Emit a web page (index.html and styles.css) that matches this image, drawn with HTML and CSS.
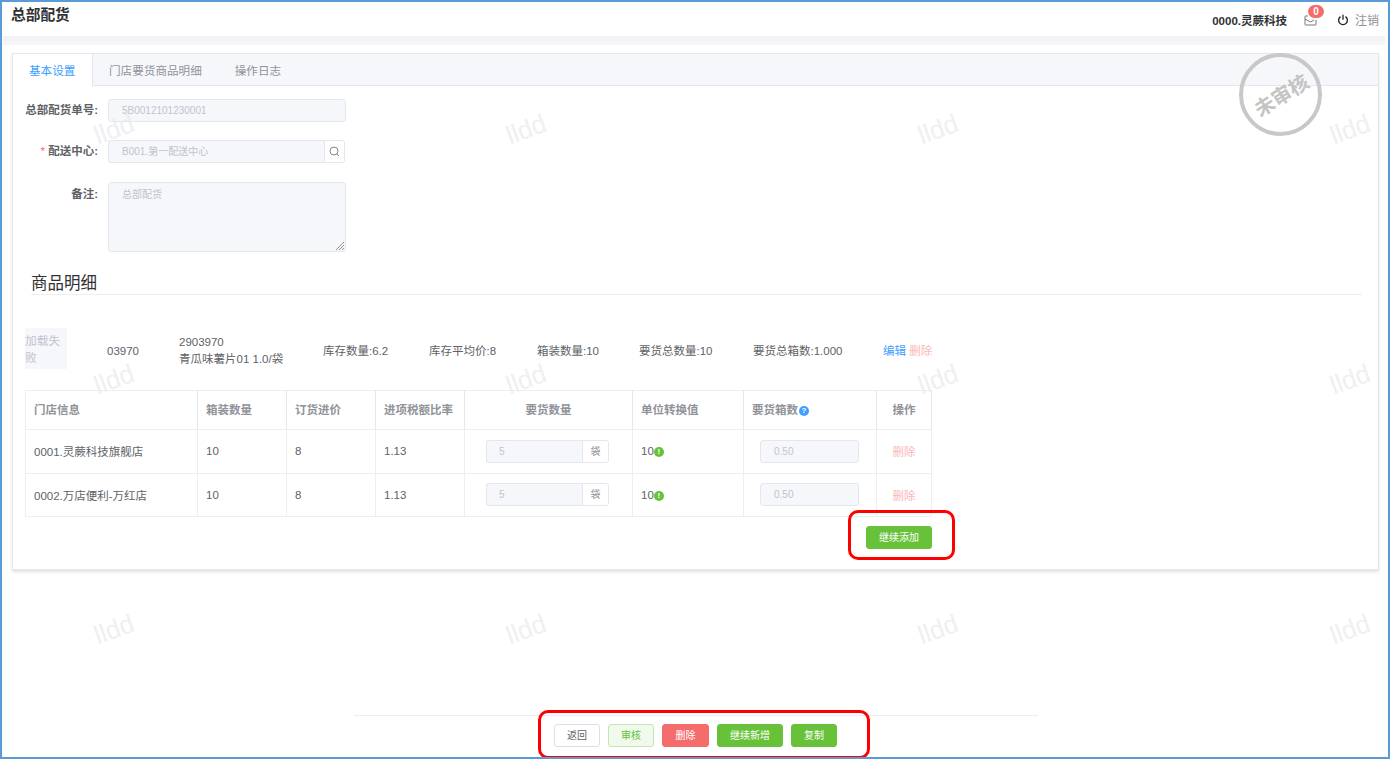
FILE: index.html
```html
<!DOCTYPE html>
<html lang="zh">
<head>
<meta charset="utf-8">
<title>总部配货</title>
<link rel="stylesheet" href="styles.css">
</head>
<body>
<div class="frame">
  <header class="topbar">
    <h1 class="title">总部配货</h1>
    <div class="user">
      <span class="company">0000.灵蕨科技</span>
      <span class="mail">
        <svg width="13" height="12" viewBox="0 0 13 12"><path d="M4 2H1.500a.5.5 0 0 0-.5.500v8a.5.5 0 0 0 .5.500h10a.5.5 0 0 0 .5-.500V6M1 5l5.500 3L10 6" fill="none" stroke="#777" stroke-width="1"/></svg>
        <span class="badge">0</span>
      </span>
      <span class="logout">
        <svg width="12" height="12" viewBox="0 0 12 12"><path d="M3.500 2.600a4.400 4.400 0 1 0 5 0M6 .8v5" fill="none" stroke="#222" stroke-width="1.300"/></svg>
        注销
      </span>
    </div>
  </header>
  <div class="strip"></div>
  <main class="content">
    <section class="card">
      <nav class="tabs">
        <span class="tab active">基本设置</span>
        <span class="tab">门店要货商品明细</span>
        <span class="tab">操作日志</span>
      </nav>
      <div class="form">
        <div class="row">
          <label class="lbl">总部配货单号:</label>
          <div class="field">5B0012101230001</div>
        </div>
        <div class="row">
          <label class="lbl"><i class="req">*</i> 配送中心:</label>
          <div class="group">
            <div class="field in-group">B001.第一配送中心</div>
            <span class="append">
              <svg width="11" height="11" viewBox="0 0 11 11"><circle cx="5" cy="5" r="4" fill="none" stroke="#888"/><path d="M8 8l2 2" stroke="#888"/></svg>
            </span>
          </div>
        </div>
        <div class="row row-area">
          <label class="lbl">备注:</label>
          <div class="field area">总部配货
            <svg class="grip" width="8" height="8" viewBox="0 0 8 8"><path d="M0 8L8 0M3 8l5-5M6 8l2-2" stroke="#777" stroke-width=".8"/></svg>
          </div>
        </div>
      </div>
      <h2 class="section">商品明细</h2>
      <div class="goods">
        <div class="thumb">加载失败</div>
        <span class="g-code">03970</span>
        <span class="g-name">2903970<br>青瓜味薯片01 1.0/袋</span>
        <span class="g-a">库存数量:6.2</span>
        <span class="g-b">库存平均价:8</span>
        <span class="g-c">箱装数量:10</span>
        <span class="g-d">要货总数量:10</span>
        <span class="g-e">要货总箱数:1.000</span>
        <span class="g-ops"><span class="link">编辑</span> <span class="danger">删除</span></span>
      </div>
      <table class="tbl">
        <colgroup>
          <col class="c1"><col class="c2"><col class="c3"><col class="c4"><col class="c5"><col class="c6"><col class="c7"><col class="c8">
        </colgroup>
        <thead>
          <tr>
            <th>门店信息</th><th>箱装数量</th><th>订货进价</th><th>进项税额比率</th>
            <th class="center">要货数量</th><th>单位转换值</th>
            <th>要货箱数<span class="help">?</span></th><th class="center">操作</th>
          </tr>
        </thead>
        <tbody>
          <tr>
            <td>0001.灵蕨科技旗舰店</td><td>10</td><td>8</td><td>1.13</td>
            <td class="center"><div class="qty"><span class="qty-in">5</span><span class="qty-unit">袋</span></div></td>
            <td>10<span class="ok">!</span></td>
            <td class="center"><div class="box">0.50</div></td>
            <td class="center danger">删除</td>
          </tr>
          <tr>
            <td>0002.万店便利-万红店</td><td>10</td><td>8</td><td>1.13</td>
            <td class="center"><div class="qty"><span class="qty-in">5</span><span class="qty-unit">袋</span></div></td>
            <td>10<span class="ok">!</span></td>
            <td class="center"><div class="box">0.50</div></td>
            <td class="center danger">删除</td>
          </tr>
        </tbody>
      </table>
      <div class="add-row"><button class="btn green add">继续添加</button></div>
    </section>
  </main>
  <footer class="footer">
    <div class="actions">
      <button class="btn plain">返回</button>
      <button class="btn pale">审核</button>
      <button class="btn red">删除</button>
      <button class="btn green wide">继续新增</button>
      <button class="btn green">复制</button>
    </div>
  </footer>

  <div class="stamp"><span>未审核</span></div>
  <div class="marks">
    <span>lldd</span><span>lldd</span><span>lldd</span><span>lldd</span>
    <span>lldd</span><span>lldd</span><span>lldd</span><span>lldd</span>
    <span>lldd</span><span>lldd</span><span>lldd</span><span>lldd</span>
  </div>
  <div class="note note-add"></div>
  <div class="note note-foot"></div>
</div>
</body>
</html>
```
FILE: styles.css
```css
* { box-sizing: border-box; }
html, body { margin: 0; height: 100%; }
body {
  font-family: "Liberation Sans", "Noto Sans CJK SC", sans-serif;
  font-size: 11.500px;
  color: #606266;
  background: #fff;
  overflow: hidden;
}
.frame {
  position: relative;
  width: 1390px;
  height: 759px;
  border: 2px solid #5b9bd5;
  display: flex;
  flex-direction: column;
  overflow: hidden;
}
.topbar {
  height: 34px;
  flex: none;
  display: flex;
  justify-content: space-between;
  align-items: flex-start;
  padding: 0 9px 0 9px;
}
.title { margin: 3px 0 0; font-size: 14.700px; line-height: 20px; font-weight: 700; color: #303133; }
.user { display: flex; align-items: center; height: 34px; padding-top: 1px; }
.company { font-weight: 700; color: #303133; margin-right: 17px; font-size: 11.500px; }
.mail { position: relative; display: flex; margin-right: 20px; margin-top: 1px; }
.badge {
  position: absolute;
  left: 4px;
  top: -9px;
  width: 16px;
  height: 13px;
  border-radius: 7px;
  background: #f56c6c;
  color: #fff;
  font-size: 10px;
  font-weight: 700;
  line-height: 13px;
  text-align: center;
}
.logout { display: flex; align-items: center; gap: 6px; color: #909399; font-size: 12px; }
.strip { height: 9px; flex: none; margin-left: 1px; margin-right: 3px; background: linear-gradient(#f0f1f4, #f6f7f9); }
.content { flex: none; padding: 8px 9px 0 10px; }
.card {
  height: 517px;
  border: 1px solid #e4e7ed;
  box-shadow: 0 2px 3px rgba(0, 0, 0, .12);
  background: #fff;
}
.tabs {
  display: flex;
  height: 32px;
  background: #f5f7fa;
  border-bottom: 1px solid #e4e7ed;
}
.tab { padding: 0 17px 0 16px; line-height: 33px; color: #909399; font-size: 11.600px; white-space: nowrap; }
.tab.active {
  width: 80px;
  height: 32px;
  padding: 0 16px;
  color: #409eff;
  background: #fff;
  border-right: 1px solid #e4e7ed;
}
.form { padding-top: 13px; display: flex; flex-direction: column; gap: 18px; }
.row { display: flex; align-items: flex-start; }
.row-area { margin-top: 1px; }
.lbl {
  width: 85px;
  flex: none;
  text-align: right;
  font-weight: 700;
  color: #606266;
  line-height: 23px;
  margin-right: 10px;
}
.row-area .lbl { line-height: 25px; }
.req { color: #f56c6c; font-style: normal; font-weight: 400; }
.field {
  width: 238px;
  height: 23px;
  padding: 0 13px;
  background: #f5f7fa;
  border: 1px solid #e4e7ed;
  border-radius: 3px;
  color: #c0c4cc;
  font-size: 10px;
  line-height: 21px;
}
.group { display: flex; width: 237px; }
.field.in-group { flex: 1; border-radius: 3px 0 0 3px; border-right: 0; }
.append {
  width: 21px;
  height: 23px;
  border: 1px solid #e4e7ed;
  border-radius: 0 3px 3px 0;
  display: flex;
  align-items: center;
  justify-content: center;
  background: #fff;
}
.field.area { position: relative; height: 70px; padding-top: 1px; line-height: 21px; }
.grip { position: absolute; right: 1px; bottom: 1px; }
.section {
  margin: 19px 16px 0 18px;
  height: 24px;
  padding-left: 0;
  font-size: 16.500px;
  font-weight: 400;
  line-height: 25px;
  color: #303133;
  border-bottom: 1px solid #ebeef5;
}
.goods {
  margin: 33px 0 0 12px;
  height: 41px;
  display: flex;
  align-items: center;
  color: #606266;
  font-size: 11.500px;
  line-height: 16.500px;
}
.goods > span { padding-top: 6px; }
.goods > .g-name { padding-top: 4px; }
.thumb {
  width: 42px;
  height: 41px;
  background: #f5f7fa;
  color: #c0c4cc;
  font-size: 11.700px;
  line-height: 17px;
  padding-top: 4px;
  margin-right: 40px;
}
.g-code { width: 72px; }
.g-name { width: 144px; }
.g-a { width: 106px; }
.g-b { width: 108px; }
.g-c { width: 102px; }
.g-d { width: 114px; }
.g-e { width: 130px; }
.link { color: #409eff; }
.danger { color: #fab6b6; }
.tbl {
  margin: 21px 0 0 12px;
  width: 906px;
  border-collapse: collapse;
  table-layout: fixed;
  font-size: 11.500px;
}
.c1 { width: 172px; } .c2 { width: 89px; } .c3 { width: 89px; } .c4 { width: 89px; }
.c5 { width: 168px; } .c6 { width: 111px; } .c7 { width: 133px; } .c8 { width: 55px; }
.tbl th, .tbl td {
  border: 1px solid #ebeef5;
  padding: 0 8px;
  text-align: left;
  height: 43.500px;
  color: #606266;
}
.tbl th {
  height: 39px;
  padding-bottom: 2px;
  color: #909399;
  font-weight: 700;
  white-space: nowrap;
  border-right-color: #e4e7ed;
}
.tbl .center { text-align: center; }
.tbl td.danger { color: #fab6b6; }
.help {
  display: inline-block;
  width: 10px;
  height: 10px;
  margin-left: 1px;
  border-radius: 50%;
  background: #409eff;
  color: #fff;
  font-size: 8px;
  line-height: 10px;
  text-align: center;
  vertical-align: 1px;
}
.ok {
  display: inline-block;
  width: 10px;
  height: 10px;
  border-radius: 50%;
  background: #67c23a;
  color: #fff;
  font-size: 8px;
  font-weight: 700;
  line-height: 10px;
  text-align: center;
  vertical-align: 1px;
}
.qty { display: flex; width: 123px; height: 23px; margin-left: 13px; }
.qty-in {
  flex: 1;
  background: #f5f7fa;
  border: 1px solid #e4e7ed;
  border-right: 0;
  border-radius: 3px 0 0 3px;
  color: #c0c4cc;
  font-size: 10px;
  line-height: 21px;
  padding-left: 12px;
  text-align: left;
}
.qty-unit {
  width: 27px;
  border: 1px solid #e4e7ed;
  border-radius: 0 3px 3px 0;
  color: #909399;
  font-size: 10px;
  line-height: 22px;
  text-align: center;
}
.box {
  width: 99px;
  height: 23px;
  margin-left: 8px;
  padding-left: 13px;
  background: #f5f7fa;
  border: 1px solid #e4e7ed;
  border-radius: 3px;
  color: #c0c4cc;
  font-size: 10px;
  line-height: 21px;
  text-align: left;
}
.add-row { width: 919px; display: flex; justify-content: flex-end; padding-top: 9px; }
.btn {
  height: 23px;
  width: 46px;
  padding: 0;
  border: 1px solid transparent;
  border-radius: 3px;
  font-family: inherit;
  font-size: 10px;
  line-height: 21px;
  text-align: center;
}
.btn.green { background: #67c23a; border-color: #67c23a; color: #fff; }
.btn.add, .btn.wide { width: 66px; }
.btn.plain { background: #fff; border-color: #dcdfe6; color: #606266; }
.btn.pale { background: #f0f9eb; border-color: #c2e7b0; color: #67c23a; }
.btn.red { width: 47px; background: #f56c6c; border-color: #f56c6c; color: #fff; }
.footer { margin-top: auto; flex: none; height: 42px; padding: 0 350px 0 352px; }
.actions {
  height: 42px;
  border-top: 1px solid #ebeef5;
  display: flex;
  gap: 8px;
  padding: 8px 0 0 200px;
}
.stamp {
  position: absolute;
  left: 1237px;
  top: 51px;
  width: 83px;
  height: 83px;
  border: 4px solid #c8c8c8;
  border-radius: 50%;
  display: flex;
  align-items: center;
  justify-content: center;
}
.stamp span {
  transform: rotate(-32deg);
  color: #c4c4c4;
  font-size: 20px;
  font-weight: 700;
  white-space: nowrap;
}
.marks {
  position: absolute;
  left: 62px;
  top: 87px;
  display: grid;
  grid-template-columns: repeat(4, 100px);
  grid-auto-rows: 80px;
  column-gap: 312px;
  row-gap: 170px;
  pointer-events: none;
}
.marks span {
  display: block;
  text-align: center;
  line-height: 80px;
  transform: rotate(-20deg);
  font-size: 26px;
  color: #e9ebee;
  opacity: .75;
}
.note {
  position: absolute;
  border: 3px solid #f00;
  border-radius: 10px;
  pointer-events: none;
}
.note-add { left: 846px; top: 508px; width: 107px; height: 50px; }
.note-foot { left: 536px; top: 708px; width: 332px; height: 49px; }
```
